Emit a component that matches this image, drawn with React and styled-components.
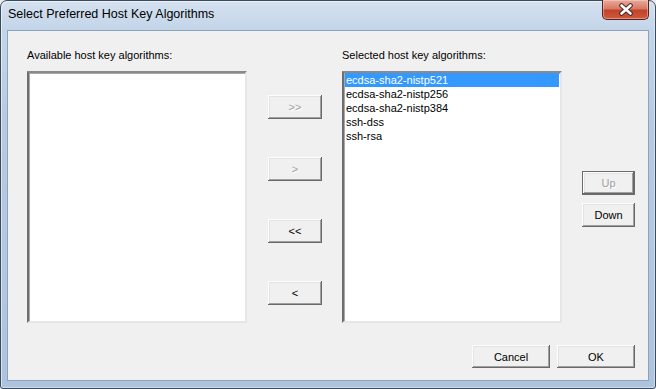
import React from 'react';
import styled, { createGlobalStyle } from 'styled-components';

const GlobalStyle = createGlobalStyle`
    html, body {
        margin: 0;
        padding: 0;
        background: #e8ecf0;
    }
    #root {
        width: 656px;
        height: 389px;
    }
`;

const available = [];
const selected = [
    'ecdsa-sha2-nistp521',
    'ecdsa-sha2-nistp256',
    'ecdsa-sha2-nistp384',
    'ssh-dss',
    'ssh-rsa',
];

const CloseGlyph = () => (
    <svg width='16' height='13' viewBox='0 0 16 13'>
        <path d='M3.5 2.5 L12.5 10.5 M12.5 2.5 L3.5 10.5' stroke='#4a2a26' strokeWidth='4.6' strokeLinecap='round' />
        <path d='M3.5 2.5 L12.5 10.5 M12.5 2.5 L3.5 10.5' stroke='#ffffff' strokeWidth='2.6' strokeLinecap='round' />
    </svg>
);

const App = () => {
    return (
        <>
            <GlobalStyle />
            <Window>
                <TitleBar>
                    <Title>Select Preferred Host Key Algorithms</Title>
                    <CloseButton aria-label='Close'>
                        <CloseGlyph />
                    </CloseButton>
                </TitleBar>
                <Client>
                    <MainRow>
                        <ListColumn>
                            <Label>Available host key algorithms:</Label>
                            <ListBox>
                                {available.map(name => (
                                    <ListItem key={name}>{name}</ListItem>
                                ))}
                            </ListBox>
                        </ListColumn>
                        <MoveColumn>
                            <Button width={54} disabled>&gt;&gt;</Button>
                            <Button width={54} disabled>&gt;</Button>
                            <Button width={54}>&lt;&lt;</Button>
                            <Button width={54}>&lt;</Button>
                        </MoveColumn>
                        <ListColumn $offset={20}>
                            <Label>Selected host key algorithms:</Label>
                            <ListBox>
                                {selected.map((name, index) => (
                                    <ListItem key={name} $active={index === 0}>{name}</ListItem>
                                ))}
                            </ListBox>
                        </ListColumn>
                        <OrderColumn>
                            <Button width={53} $framed disabled>Up</Button>
                            <Button width={53}>Down</Button>
                        </OrderColumn>
                    </MainRow>
                    <ButtonBar>
                        <Button width={78} height={23}>Cancel</Button>
                        <Button width={78} height={23}>OK</Button>
                    </ButtonBar>
                </Client>
            </Window>
        </>
    );
};

export default App;

const Window = styled.div`
    display: flex;
    flex-flow: column nowrap;
    box-sizing: border-box;
    width: 656px;
    height: 389px;
    padding: 0 6px 7px 6px;

    border: 1px solid #3c4b5c;
    border-radius: 7px 7px 3px 3px;
    background: linear-gradient(to bottom, #d4e1ef 0px, #c3d5e9 29px, #b6cbe2 120px, #aec4de 100%);
    box-shadow: inset 1px 1px 0 rgba(255, 255, 255, 0.55), inset -1px -1px 0 rgba(255, 255, 255, 0.4);

    font-family: 'Liberation Sans', Arial, sans-serif;
`;

const TitleBar = styled.div`
    display: flex;
    align-items: flex-start;
    justify-content: space-between;
    height: 29px;
`;

const Title = styled.div`
    margin: 6px 0 0 1px;
    font-size: 12.5px;
    line-height: 15px;
    color: #000;
`;

const CloseButton = styled.div`
    display: flex;
    align-items: center;
    justify-content: center;
    box-sizing: border-box;
    width: 47px;
    height: 20px;
    margin-top: -1px;

    border: 1px solid #5a1f18;
    border-top: none;
    border-radius: 0 0 5px 5px;
    background: linear-gradient(to bottom, #e9a99b 0%, #d77a66 45%, #c2432b 55%, #cf5a3c 100%);
    box-shadow: inset 0 0 0 1px rgba(255, 220, 210, 0.45);
`;

const Client = styled.div`
    display: flex;
    flex-flow: column nowrap;
    flex: 1;
    box-sizing: border-box;
    padding: 18px 13px 12px 19px;

    border: 1px solid #8da3bb;
    background: #f0f0f0;
    font-size: 11px;
    color: #000;
`;

const MainRow = styled.div`
    display: flex;
    height: 274px;
`;

const ListColumn = styled.div`
    display: flex;
    flex-flow: column nowrap;
    width: 220px;
    margin-left: ${props => props.$offset || 0}px;
`;

const Label = styled.div`
    height: 13px;
    margin-bottom: 9px;
    line-height: 13px;
    white-space: nowrap;
`;

const ListBox = styled.div`
    box-sizing: border-box;
    height: 252px;
    padding: 0 1px;

    background: #fff;
    border-style: solid;
    border-width: 2px;
    border-color: #8a8a8a #e6e6e6 #e6e6e6 #6e6e6e;
    box-shadow: inset 1px 1px 0 #a8a8a8;
`;

const ListItem = styled.div`
    height: 14px;
    padding-left: 1px;
    line-height: 14px;
    white-space: nowrap;
    background: ${props => (props.$active ? '#3399ff' : 'transparent')};
    color: ${props => (props.$active ? '#fff' : '#000')};
`;

const MoveColumn = styled.div`
    display: flex;
    flex-flow: column nowrap;
    gap: 38px;
    width: 54px;
    margin-left: 21px;
    padding-top: 46px;
`;

const OrderColumn = styled.div`
    display: flex;
    flex-flow: column nowrap;
    gap: 8px;
    width: 53px;
    margin-left: 20px;
    padding-top: 122px;
`;

const ButtonBar = styled.div`
    display: flex;
    justify-content: flex-end;
    gap: 7px;
    margin-top: auto;
`;

const Button = styled.button`
    box-sizing: border-box;
    width: ${props => props.width}px;
    height: ${props => props.height || 24}px;
    padding: 0;

    border: ${props => (props.$framed ? '1px solid #6b6b6b' : 'none')};
    background: #f0f0f0;
    box-shadow: inset -1px -1px 0 #696969, inset 1px 1px 0 #fdfdfd, inset -2px -2px 0 #a0a0a0, inset 2px 2px 0 #e3e3e3;

    font-family: 'Liberation Sans', Arial, sans-serif;
    font-size: 11px;
    color: #000;

    &:disabled {
        color: #a0a0a0;
        text-shadow: 1px 1px 0 #fff;
    }
`;
